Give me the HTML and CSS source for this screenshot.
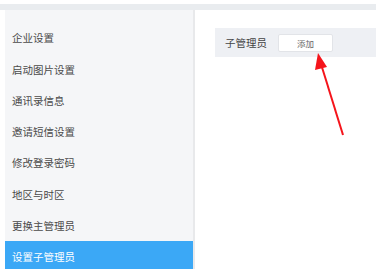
FILE: index.html
```html
<!DOCTYPE html>
<html lang="zh-CN">
<head>
    <meta charset="UTF-8">
    <title>设置子管理员</title>
    <link rel="stylesheet" href="styles.css">
</head>
<body>
    <div class="top-bar"></div>
    <div class="layout">
        <ul class="sidebar">
            <li>企业设置</li>
            <li>启动图片设置</li>
            <li>通讯录信息</li>
            <li>邀请短信设置</li>
            <li>修改登录密码</li>
            <li>地区与时区</li>
            <li>更换主管理员</li>
            <li class="active">设置子管理员</li>
        </ul>
        <div class="main">
            <div class="admin-row">
                <span class="admin-label">子管理员</span>
                <button class="add-btn">添加</button>
            </div>
        </div>
    </div>

    <!-- annotation arrow -->
    <svg class="arrow" width="376" height="269" viewBox="0 0 376 269">
        <line x1="343" y1="135" x2="321" y2="64" stroke="#f5141b" stroke-width="2"/>
        <polygon points="318,53 327,67 315,70" fill="#f5141b"/>
    </svg>
</body>
</html>
```

FILE: styles.css
```css
* {
    box-sizing: border-box;
    margin: 0;
    padding: 0;
}

body {
    font-family: "Noto Sans CJK SC", "Noto Sans", sans-serif;
    background: #fff;
    color: #444;
    width: 376px;
    height: 269px;
    overflow: hidden;
}

.top-bar {
    margin-top: 4px;
    height: 6px;
    background: #e9ecef;
}

.layout {
    display: flex;
    height: 259px;
}

.sidebar {
    list-style: none;
    margin-left: 5px;
    width: 190px;
    padding-top: 12.25px;
    background: #f5f6f8;
    border-right: 2px solid #e8e9eb;
}

.sidebar li {
    height: 31.25px;
    line-height: 31.25px;
    padding-left: 7px;
    font-size: 10.5px;
    color: #4a4a4a;
}

.sidebar li.active {
    background: #3ba8f6;
    color: #fff;
}

.main {
    flex: 1;
    padding: 18px 0 0 20px;
}

.admin-row {
    display: flex;
    align-items: center;
    height: 29px;
    padding-left: 10px;
    background: #eef0f4;
}

.admin-label {
    font-size: 10.5px;
    color: #444;
    width: 53px;
}

.add-btn {
    width: 55px;
    height: 18px;
    background: #fff;
    border: 1px solid #e2e4e8;
    border-radius: 2px;
    font-family: inherit;
    font-size: 8.5px;
    color: #666;
}

.arrow {
    position: absolute;
    left: 0;
    top: 0;
}
```
